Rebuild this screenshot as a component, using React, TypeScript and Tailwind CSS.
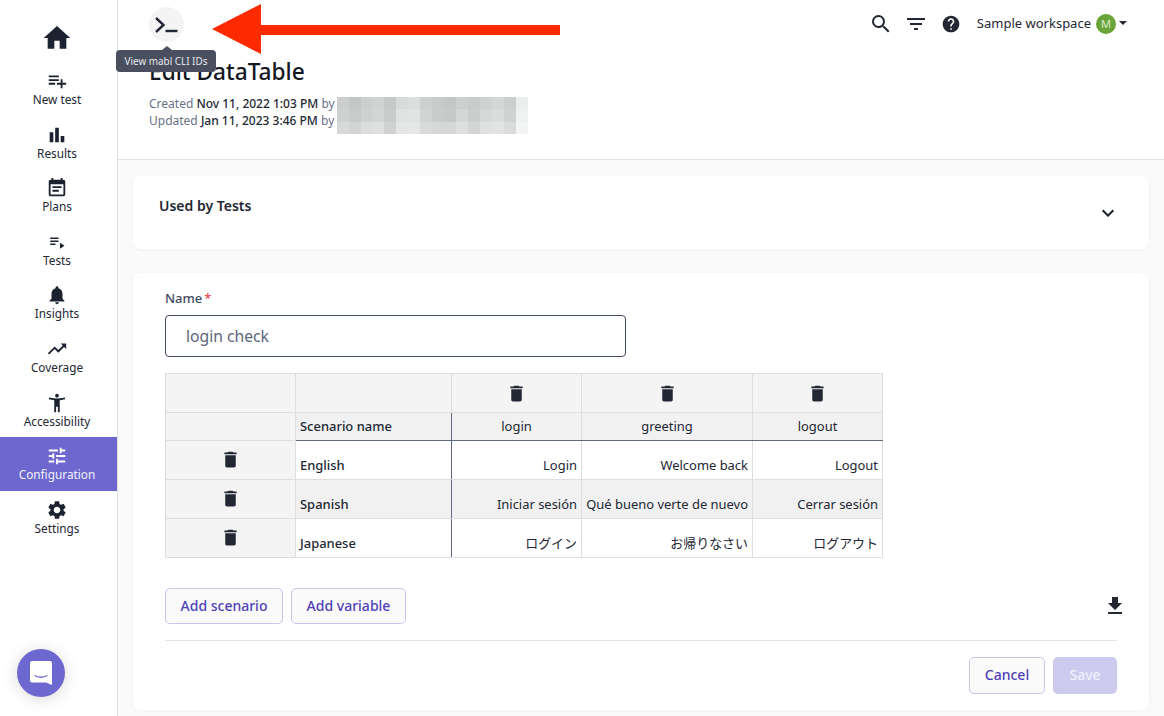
import React from "react";
import {
  MdHome, MdPlaylistAdd, MdBarChart, MdEventNote, MdPlaylistPlay, MdNotifications,
  MdTrendingUp, MdAccessibilityNew, MdTune, MdSettings, MdDelete, MdFileDownload,
  MdSearch, MdFilterList, MdHelp, MdKeyboardArrowDown,
} from "react-icons/md";

const nav = [
  { label: "New test", Icon: MdPlaylistAdd, size: 22 },
  { label: "Results", Icon: MdBarChart, size: 22 },
  { label: "Plans", Icon: MdEventNote, size: 22 },
  { label: "Tests", Icon: MdPlaylistPlay, size: 18 },
  { label: "Insights", Icon: MdNotifications, size: 22 },
  { label: "Coverage", Icon: MdTrendingUp, size: 22 },
  { label: "Accessibility", Icon: MdAccessibilityNew, size: 22 },
  { label: "Configuration", Icon: MdTune, size: 22, active: true },
  { label: "Settings", Icon: MdSettings, size: 22 },
];

const mosaic = [
  [205, 197, 205, 209, 199, 217, 220, 206, 201, 197, 206, 202, 208, 213, 205, 236],
  [207, 201, 207, 211, 202, 224, 226, 210, 202, 199, 213, 204, 214, 218, 209, 240],
  [216, 211, 220, 222, 209, 228, 229, 217, 214, 214, 222, 211, 223, 226, 218, 243],
];

const rows = [
  { name: "English", a: "Login", b: "Welcome back", c: "Logout", shade: false },
  { name: "Spanish", a: "Iniciar sesión", b: "Qué bueno verte de nuevo", c: "Cerrar sesión", shade: true },
  { name: "Japanese", a: "ログイン", b: "お帰りなさい", c: "ログアウト", shade: false },
];

function Trash() {
  return <MdDelete className="mx-auto block text-[#222733]" size={21} />;
}

export default function App() {
  return (
    <div className="relative flex h-[716px] w-[1164px] overflow-hidden bg-[#fafafa] font-['Noto_Sans','Noto_Sans_CJK_JP',sans-serif] text-[#222733]">
      <aside className="flex w-[118px] shrink-0 flex-col border-r border-[#e2e2e2] bg-white">
        <div className="flex h-[62px] items-center justify-center pr-[3px] pt-[14px]">
          <MdHome size={32} className="text-[#1c2230]" />
        </div>
        {nav.map(({ label, Icon, size, active }) => (
          <div
            key={label}
            className={`flex h-[53.6px] flex-col items-center pr-[3px] pt-[8px] text-[11.8px] leading-[14px] ${active ? "bg-[#6c68d0] text-[#f1f0fb]" : "text-[#222733]"}`}
          >
            <span className="flex h-[22px] items-center justify-center">
              <Icon size={size} className={active ? "text-white" : "text-[#1c2230]"} />
            </span>
            <span>{label}</span>
          </div>
        ))}
      </aside>

      <main className="flex min-w-0 flex-1 flex-col">
        <header className="h-[160px] border-b border-[#e2e2e2] bg-white">
          <div className="flex h-[48px] items-center justify-between pl-[31px] pr-[37px]">
            <div className="flex h-[35px] w-[35px] items-center justify-center rounded-full bg-[#f4f4f4]">
              <svg width="24" height="24" viewBox="0 0 24 24" fill="none" stroke="#222733" strokeWidth="2.4">
                <path d="M1 6 L8.5 13 L1 20" />
                <path d="M10.5 19 H22.5" />
              </svg>
            </div>
            <div className="flex items-center">
              <MdSearch size={24} className="mr-[11px]" />
              <MdFilterList size={24} className="mr-[13px]" />
              <MdHelp size={20} className="mr-[16px]" />
              <span className="text-[13px]">Sample workspace</span>
              <span className="ml-[5px] flex h-[20px] w-[20px] items-center justify-center rounded-full bg-[#6aa338] text-[11px] text-[#dfeccf]">M</span>
              <span className="mb-[3px] ml-[3px] h-0 w-0 border-x-[4px] border-t-[4px] border-x-transparent border-t-[#222733]" />
            </div>
          </div>
          <div className="pl-[31px]">
            <h1 className="mt-[6px] text-[22.7px] font-medium leading-[36px] text-[#14171f]">Edit DataTable</h1>
            <div className="mt-[5px] flex items-start text-[12px] leading-[17px]">
              <div>
                <div className="flex h-[17px] items-center">
                  <span className="text-[#6a7186]">Created&nbsp;</span>
                  <span className="font-medium">Nov 11, 2022 1:03 PM</span>
                  <span className="text-[#6a7186]">&nbsp;by</span>
                </div>
                <div className="flex h-[17px] items-center">
                  <span className="text-[#6a7186]">Updated&nbsp;</span>
                  <span className="font-medium">Jan 11, 2023 3:46 PM</span>
                  <span className="text-[#6a7186]">&nbsp;by</span>
                </div>
              </div>
              <div className="ml-[2px] mt-[2px]">
                {mosaic.map((r, i) => (
                  <div key={i} className="flex">
                    {r.map((g, j) => (
                      <span key={j} className="block h-[12.4px] w-[11.94px]" style={{ backgroundColor: `rgb(${g},${g + 1},${g + 1})` }} />
                    ))}
                  </div>
                ))}
              </div>
            </div>
          </div>
        </header>

        <div className="flex flex-col gap-[24px] pl-[15px] pr-[15px] pt-[16px]">
          <section className="relative h-[73px] rounded-[8px] bg-white pl-[26px] pt-[20px] shadow-[0_1px_4px_rgba(0,0,0,0.04)]">
            <h2 className="text-[14px] font-semibold leading-[20px]">Used by Tests</h2>
            <MdKeyboardArrowDown size={24} className="absolute right-[29px] top-[25px] text-[#1b1f2a]" />
          </section>

          <section className="h-[437px] rounded-[8px] bg-white px-[32px] pt-[16px] shadow-[0_1px_4px_rgba(0,0,0,0.04)]">
            <div className="text-[13px] font-medium leading-[18px] text-[#414b60]">
              Name<span className="ml-[2px] text-[#ef4444]">*</span>
            </div>
            <input
              readOnly
              value="login check"
              className="mt-[8px] block h-[42px] w-[461px] rounded-[4px] border border-[#414b60] bg-white pl-[20px] text-[15.7px] text-[#5c667a] outline-none"
            />
            <table className="mt-[16px] w-[717px] table-fixed border-collapse whitespace-nowrap text-[12.95px] leading-[18px]">
              <colgroup>
                <col className="w-[130px]" />
                <col className="w-[156px]" />
                <col className="w-[130px]" />
                <col className="w-[171px]" />
                <col className="w-[130px]" />
              </colgroup>
              <tbody>
                <tr className="h-[39px] bg-[#f4f4f4]">
                  <td className="border border-[#dedede]" />
                  <td className="border border-[#dedede]" />
                  <td className="border border-[#dedede]"><Trash /></td>
                  <td className="border border-[#dedede]"><Trash /></td>
                  <td className="border border-[#dedede]"><Trash /></td>
                </tr>
                <tr className="h-[28px]">
                  <td className="border border-[#dedede] bg-[#f4f4f4]" />
                  <td className="border border-[#dedede] border-r-[#5f687c] border-b-[#5f687c] bg-[#f1f1f1] px-[4px] pb-[2px] font-medium">Scenario name</td>
                  <td className="border border-[#dedede] border-b-[#5f687c] bg-[#f1f1f1] pb-[2px] text-center">login</td>
                  <td className="border border-[#dedede] border-b-[#5f687c] bg-[#f1f1f1] pb-[2px] text-center">greeting</td>
                  <td className="border border-[#dedede] border-b-[#5f687c] bg-[#f1f1f1] pb-[2px] text-center">logout</td>
                </tr>
                {rows.map((r) => (
                  <tr key={r.name} className="h-[39px]">
                    <td className="border border-[#dedede] bg-[#f4f4f4] pb-[1px]"><Trash /></td>
                    <td className={`border border-[#dedede] border-r-[#5f687c] px-[4px] pb-[5px] align-bottom font-medium ${r.shade ? "bg-[#f1f1f1]" : "bg-white"}`}>{r.name}</td>
                    <td className={`border border-[#dedede] px-[4px] pb-[5px] text-right align-bottom ${r.shade ? "bg-[#f1f1f1]" : "bg-white"}`}>{r.a}</td>
                    <td className={`border border-[#dedede] px-[4px] pb-[5px] text-right align-bottom ${r.shade ? "bg-[#f1f1f1]" : "bg-white"}`}>{r.b}</td>
                    <td className={`border border-[#dedede] px-[4px] pb-[5px] text-right align-bottom ${r.shade ? "bg-[#f1f1f1]" : "bg-white"}`}>{r.c}</td>
                  </tr>
                ))}
              </tbody>
            </table>

            <div className="mt-[30px] flex items-center justify-between">
              <div className="flex gap-[8px]">
                <button className="h-[36px] w-[118px] rounded-[5px] border border-[#c9c5ef] bg-[#fafafa] pb-[2px] text-[14px] font-medium text-[#4f3fb8]">Add scenario</button>
                <button className="h-[36px] w-[115px] rounded-[5px] border border-[#c9c5ef] bg-[#fafafa] pb-[2px] text-[14px] font-medium text-[#4f3fb8]">Add variable</button>
              </div>
              <MdFileDownload size={24} className="mr-[-10px] text-[#222733]" />
            </div>
            <div className="mt-[16px] border-t border-[#e4e4e6]" />
            <div className="mt-[16px] flex justify-end gap-[8px]">
              <button className="h-[37px] w-[76px] rounded-[5px] border border-[#c9c5ef] bg-[#fafafa] pb-[2px] text-[14px] font-medium text-[#4f3fb8]">Cancel</button>
              <button className="h-[37px] w-[64px] rounded-[5px] bg-[#cccbee] pb-[2px] text-[14px] font-medium text-[#f1f0fb]">Save</button>
            </div>
          </section>
        </div>
      </main>

      <div className="absolute left-[116px] top-[50px] flex h-[22px] w-[100px] items-center justify-center rounded-[4px] bg-[#4a4f5f] text-[9.9px] text-[#e8e9ee]">
        <span className="absolute left-[46px] top-[-4px] h-0 w-0 border-x-[5px] border-b-[4px] border-x-transparent border-b-[#4a4f5f]" />
        View mabl CLI IDs
      </div>

      <svg className="absolute left-[205px] top-0" width="360" height="60" viewBox="0 0 360 60">
        <polygon points="7,29 56,4 56,25 355,25 355,35 56,35 56,54" fill="#ff2a00" />
      </svg>

      <div className="absolute left-[17px] top-[649px] flex h-[48px] w-[48px] items-center justify-center rounded-full bg-[#6c68d0] shadow-[0_2px_16px_rgba(0,0,0,0.15)]">
        <svg width="24" height="26" viewBox="0 0 24 26">
          <path d="M3 1 H21 a2 2 0 0 1 2 2 V25 L17 22.5 H3 a2 2 0 0 1 -2 -2 V3 a2 2 0 0 1 2 -2 Z" fill="#fff" />
          <path d="M5.5 15.5 Q12 19 18.5 15.5" stroke="#6c68d0" strokeWidth="1.3" fill="none" />
        </svg>
      </div>
    </div>
  );
}
